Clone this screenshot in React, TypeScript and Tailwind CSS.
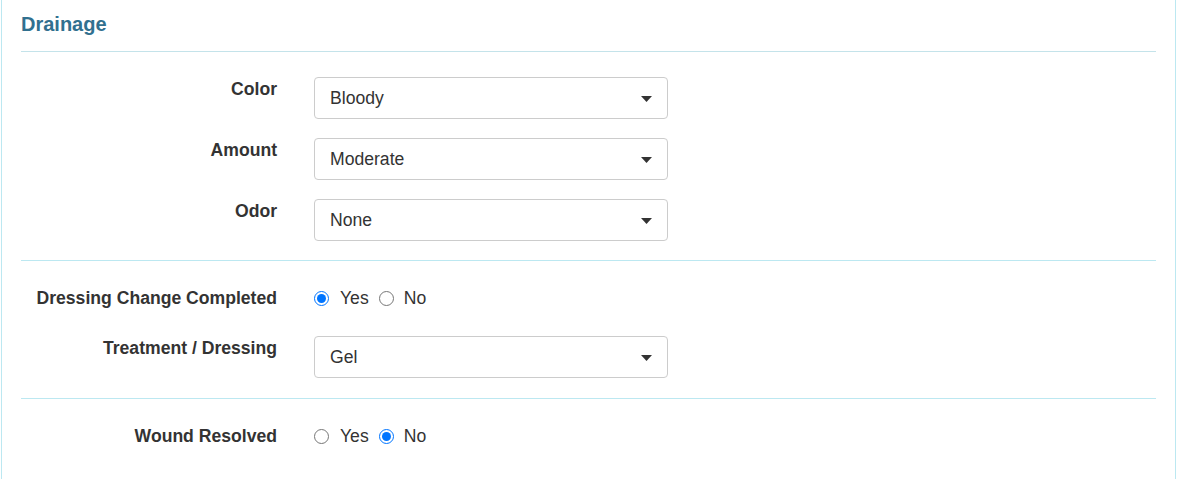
import { FC } from 'react';

const font = { fontFamily: '"Liberation Sans", Arial, sans-serif' };

interface SelectProps {
  value: string;
}

const FakeSelect: FC<SelectProps> = ({ value }: SelectProps) => {
  return (
    <div className="flex h-[42px] w-[354px] items-center justify-between rounded border border-[#cccccc] bg-white pl-[15px] pr-[15px] text-[17.6px] text-[#333333]">
      <span>{value}</span>
      <svg width="11" height="6" viewBox="0 0 11 6" className="mt-px">
        <path d="M0 0 L11 0 L5.5 6 Z" fill="#333333" />
      </svg>
    </div>
  );
};

interface RowProps {
  label: string;
  children: React.ReactNode;
  className?: string;
}

const Row: FC<RowProps> = ({ label, children, className }: RowProps) => {
  return (
    <div className={'flex items-start ' + (className ?? '')}>
      <label className="w-[256px] shrink-0 text-right text-[17.6px] font-bold leading-[24px] text-[#333333]">
        {label}
      </label>
      <div className="ml-[37px]">{children}</div>
    </div>
  );
};

interface RadioProps {
  name: string;
  value: 'yes' | 'no';
}

const YesNo: FC<RadioProps> = ({ name, value }: RadioProps) => {
  return (
    <div className="flex items-center text-[17.6px] leading-[24px] text-[#333333]">
      <label className="flex items-center">
        <input type="radio" name={name} defaultChecked={value === 'yes'} className="m-0 h-[15px] w-[15px]" />
        <span className="ml-[11px]">Yes</span>
      </label>
      <label className="ml-[10px] flex items-center">
        <input type="radio" name={name} defaultChecked={value === 'no'} className="m-0 h-[15px] w-[15px]" />
        <span className="ml-[10px]">No</span>
      </label>
    </div>
  );
};

const App = (): JSX.Element => {
  return (
    <div className="min-h-[479px] bg-white" style={font}>
      <div className="ml-px min-h-[479px] w-[1175px] border-x border-[#bce8f1] px-[19px]">
        {/* header */}
        <div className="border-b border-[#c4e3ea] pt-[12px] pb-[15px]">
          <h3 className="text-[20px] font-bold leading-[24px] text-[#31708f]">Drainage</h3>
        </div>

        <div className="flex flex-col gap-[19px] border-b border-[#bce8f1] pt-[25px] pb-[19px]">
          <Row label="Color">
            <FakeSelect value="Bloody" />
          </Row>
          <Row label="Amount">
            <FakeSelect value="Moderate" />
          </Row>
          <Row label="Odor">
            <FakeSelect value="None" />
          </Row>
        </div>

        <div className="flex flex-col gap-[19px] border-b border-[#bce8f1] pt-[25px] pb-[20px]">
          <Row label="Dressing Change Completed" className="h-[31px]">
            <YesNo name="dressing" value="yes" />
          </Row>
          <Row label="Treatment / Dressing">
            <FakeSelect value="Gel" />
          </Row>
        </div>

        <div className="pt-[25px]">
          <Row label="Wound Resolved">
            <YesNo name="resolved" value="no" />
          </Row>
        </div>
      </div>
    </div>
  );
};

export default App;
